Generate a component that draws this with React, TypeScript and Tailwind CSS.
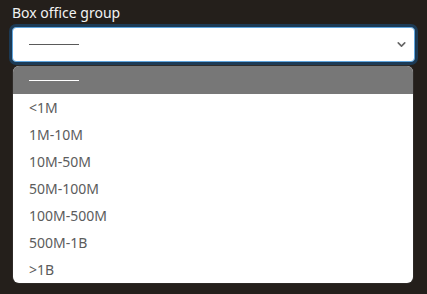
import { ChevronDown } from 'lucide-react';

const OPTIONS = ['<1M', '1M-10M', '10M-50M', '50M-100M', '100M-500M', '500M-1B', '>1B'];

export default function App() {
  return (
    <div
      className="h-[294px] w-[427px] bg-[#241f1b] px-[12px] pt-[3px] text-[14px]"
      style={{ fontFamily: '"Noto Sans", "Open Sans", sans-serif' }}
    >
      <label className="block h-[20px] leading-[20px] text-[#f2f2f2]">Box office group</label>
      <div className="relative mt-[4px]">
        <div className="flex h-[35px] items-center justify-between rounded-[4px] border border-[#5fa5de] bg-white pl-[16px] pr-[6px] shadow-[0_0_0_3px_#1c3a55]">
          <span className="block h-px w-[50px] bg-[#5a5a5a]" />
          <ChevronDown className="h-[13px] w-[13px] text-[#666]" strokeWidth={3} />
        </div>
        <ul className="mt-[4px] ml-px w-[400px] overflow-hidden rounded-[6px] bg-white shadow-[0_0_0_1px_#2e2a27]">
          <li className="flex h-[28px] items-center bg-[#777777] pl-[16px]">
            <span className="block h-px w-[50px] bg-white" />
          </li>
          {OPTIONS.map(o => (
            <li key={o} className="flex h-[27px] items-center pl-[16px] text-[#5c5c5c]">
              {o}
            </li>
          ))}
        </ul>
      </div>
    </div>
  );
}
